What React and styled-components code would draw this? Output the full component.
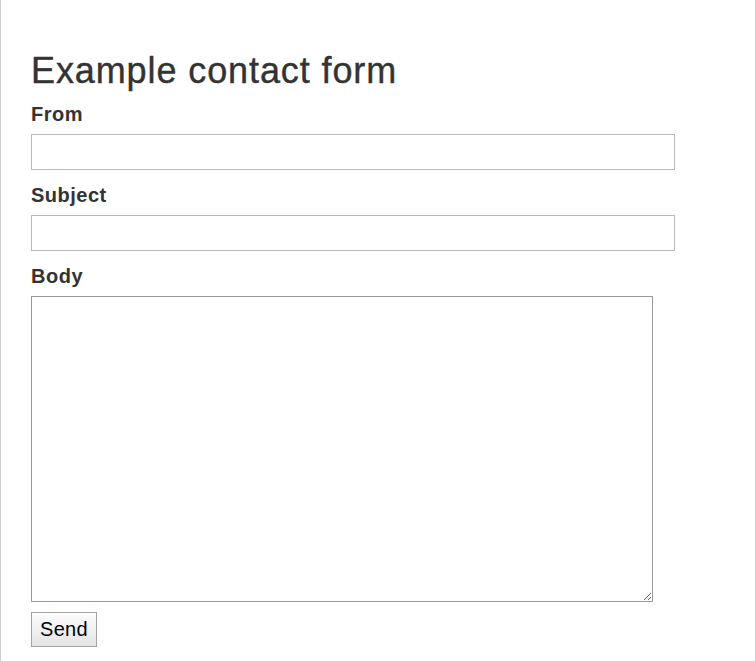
import React from 'react'
import styled, { createGlobalStyle } from 'styled-components'

const GlobalStyle = createGlobalStyle`
  html, body {
    margin: 0;
    padding: 0;
    background: #fff;
  }
  body {
    font-family: "Liberation Sans", Arial, sans-serif;
    color: #333;
  }
`

const Page = styled.div`
  box-sizing: border-box;
  width: 756px;
  min-height: 100vh;
  border-left: 1px solid #cfcfcf;
  border-right: 1px solid #cfcfcf;
  padding: 51px 0 0 30px;
`

const Title = styled.h1`
  margin: 0 0 11px;
  font-size: 36px;
  line-height: 40px;
  font-weight: normal;
  letter-spacing: 0.9px;
  -webkit-text-stroke: 0.4px #333;
  color: #333;
`

const Form = styled.form`
  display: flex;
  flex-direction: column;
  align-items: flex-start;
`

const Label = styled.label`
  display: block;
  font-size: 20px;
  line-height: 24px;
  font-weight: bold;
  letter-spacing: 0.5px;
  color: #333;
  margin-bottom: 8px;
`

const Field = styled.input`
  box-sizing: border-box;
  width: 644px;
  height: 36px;
  margin: 0 0 13px;
  border: 1px solid #b8b8b8;
  background: #fff;
  font-size: 18px;
  font-family: inherit;
  outline: none;
`

const Area = styled.textarea`
  box-sizing: border-box;
  display: block;
  width: 622px;
  height: 306px;
  margin: 0 0 10px;
  border: 1px solid #9a9a9a;
  background: #fff;
  font-size: 16px;
  font-family: inherit;
  outline: none;
`

const SendButton = styled.button`
  box-sizing: border-box;
  width: 66px;
  height: 35px;
  padding: 0;
  border: 1px solid #a3a3a3;
  border-radius: 0;
  background: linear-gradient(#fdfdfd, #e4e4e4);
  font-family: "Liberation Sans", Arial, sans-serif;
  font-size: 20px;
  letter-spacing: 0.3px;
  color: #000;
`

export default function App() {
  return (
    <>
      <GlobalStyle />
      <Page>
        <Title>Example contact form</Title>
        <Form onSubmit={(e) => e.preventDefault()}>
          <Label htmlFor="from">From</Label>
          <Field id="from" type="text" />
          <Label htmlFor="subject">Subject</Label>
          <Field id="subject" type="text" />
          <Label htmlFor="body">Body</Label>
          <Area id="body" />
          <SendButton type="submit">Send</SendButton>
        </Form>
      </Page>
    </>
  )
}
